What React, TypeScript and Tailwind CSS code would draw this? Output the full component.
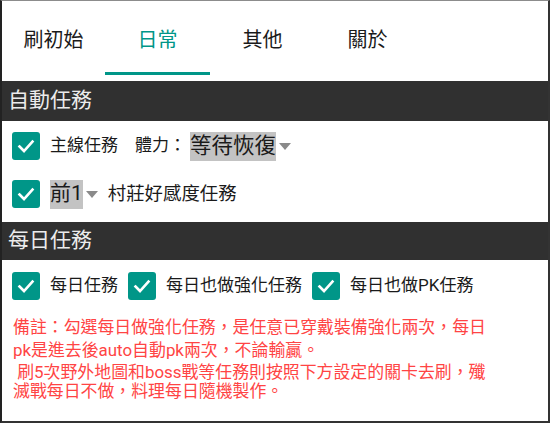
import React from 'react';

const tabs = ['刷初始', '日常', '其他', '關於'];

const CheckBox: React.FC = () => (
  <span className="flex h-[28px] w-[28px] shrink-0 items-center justify-center rounded-[3px] bg-[#009688]">
    <svg width="20" height="20" viewBox="0 0 20 20" fill="none">
      <path d="M3.5 10.5 L8 15 L16.5 5.5" stroke="#ffffff" strokeWidth="2.6" strokeLinecap="square" />
    </svg>
  </span>
);

const Caret: React.FC = () => (
  <svg width="12" height="8" viewBox="0 0 12 8" className="ml-[3px] mt-[2px]">
    <path d="M0 0 L12 0 L6 7 Z" fill="#8a8a8a" />
  </svg>
);

const SectionBar: React.FC<{ title: string; h: string }> = ({ title, h }) => (
  <div className={`flex items-center bg-[#303030] pl-[6px] text-[21px] text-[#ececec] ${h}`}>{title}</div>
);

export default function App() {
  return (
    <div
      className="h-[424px] w-[552px] overflow-hidden bg-white"
      style={{ fontFamily: 'Roboto, "Noto Sans CJK TC", sans-serif' }}
    >
      <div className="h-[423px] w-[550px] border-l-2 border-r-2 border-t border-b-2 border-l-[#222] border-r-[#333] border-t-[#8c8c8c] border-b-[#333]">
        {/* Tabs */}
        <div className="flex h-[74px]">
          {tabs.map((t, i) => (
            <div key={t} className="flex w-[105px] flex-col items-center first:w-[103px]">
              <div
                className={`flex h-[71px] items-center pt-[6px] text-[20px] ${i === 1 ? 'text-[#009688]' : 'text-[#1a1a1a]'}`}
              >
                {t}
              </div>
              {i === 1 && <div className="h-[3px] w-[105px] bg-[#009688]" />}
            </div>
          ))}
        </div>
        <div className="h-[6px]" />

        <SectionBar title="自動任務" h="h-[40px]" />

        {/* main quest row */}
        <div className="mt-[10px] flex h-[30px] items-center pl-[10px] text-[17px] text-[#1a1a1a]">
          <CheckBox />
          <span className="ml-[10px]">主線任務</span>
          <span className="ml-[17px]">體力：</span>
          <span className="ml-[4px] flex h-[29px] items-center bg-[#c3c3c3] text-[21.5px]">等待恢復</span>
          <Caret />
        </div>

        {/* village row */}
        <div className="mt-[18px] flex h-[30px] items-center pl-[10px] text-[17px] text-[#1a1a1a]">
          <CheckBox />
          <span className="ml-[10px] flex h-[29px] items-center bg-[#c3c3c3] text-[21px]">前1</span>
          <Caret />
          <span className="ml-[10px] text-[18.4px]">村莊好感度任務</span>
        </div>

        <div className="h-[13px]" />
        <SectionBar title="每日任務" h="h-[38px]" />

        {/* daily row */}
        <div className="mt-[12px] flex h-[28px] items-center pl-[10px] text-[17px] text-[#1a1a1a]">
          <CheckBox />
          <span className="ml-[10px]">每日任務</span>
          <span className="ml-[10px]"><CheckBox /></span>
          <span className="ml-[10px]">每日也做強化任務</span>
          <span className="ml-[10px]"><CheckBox /></span>
          <span className="ml-[10px]">每日也做PK任務</span>
        </div>

        {/* note */}
        <div className="mt-[15px] pl-[11px] text-[16.9px] text-[#ff4444]">
          <div className="leading-[24px]">備註：勾選每日做強化任務，是任意已穿戴裝備強化兩次，每日</div>
          <div className="leading-[23px]">pk是進去後auto自動pk兩次，不論輸贏。</div>
          <div className="leading-[20px]">&nbsp;刷5次野外地圖和boss戰等任務則按照下方設定的關卡去刷，殲</div>
          <div className="leading-[18px]">滅戰每日不做，料理每日隨機製作。</div>
        </div>
      </div>
    </div>
  );
}
